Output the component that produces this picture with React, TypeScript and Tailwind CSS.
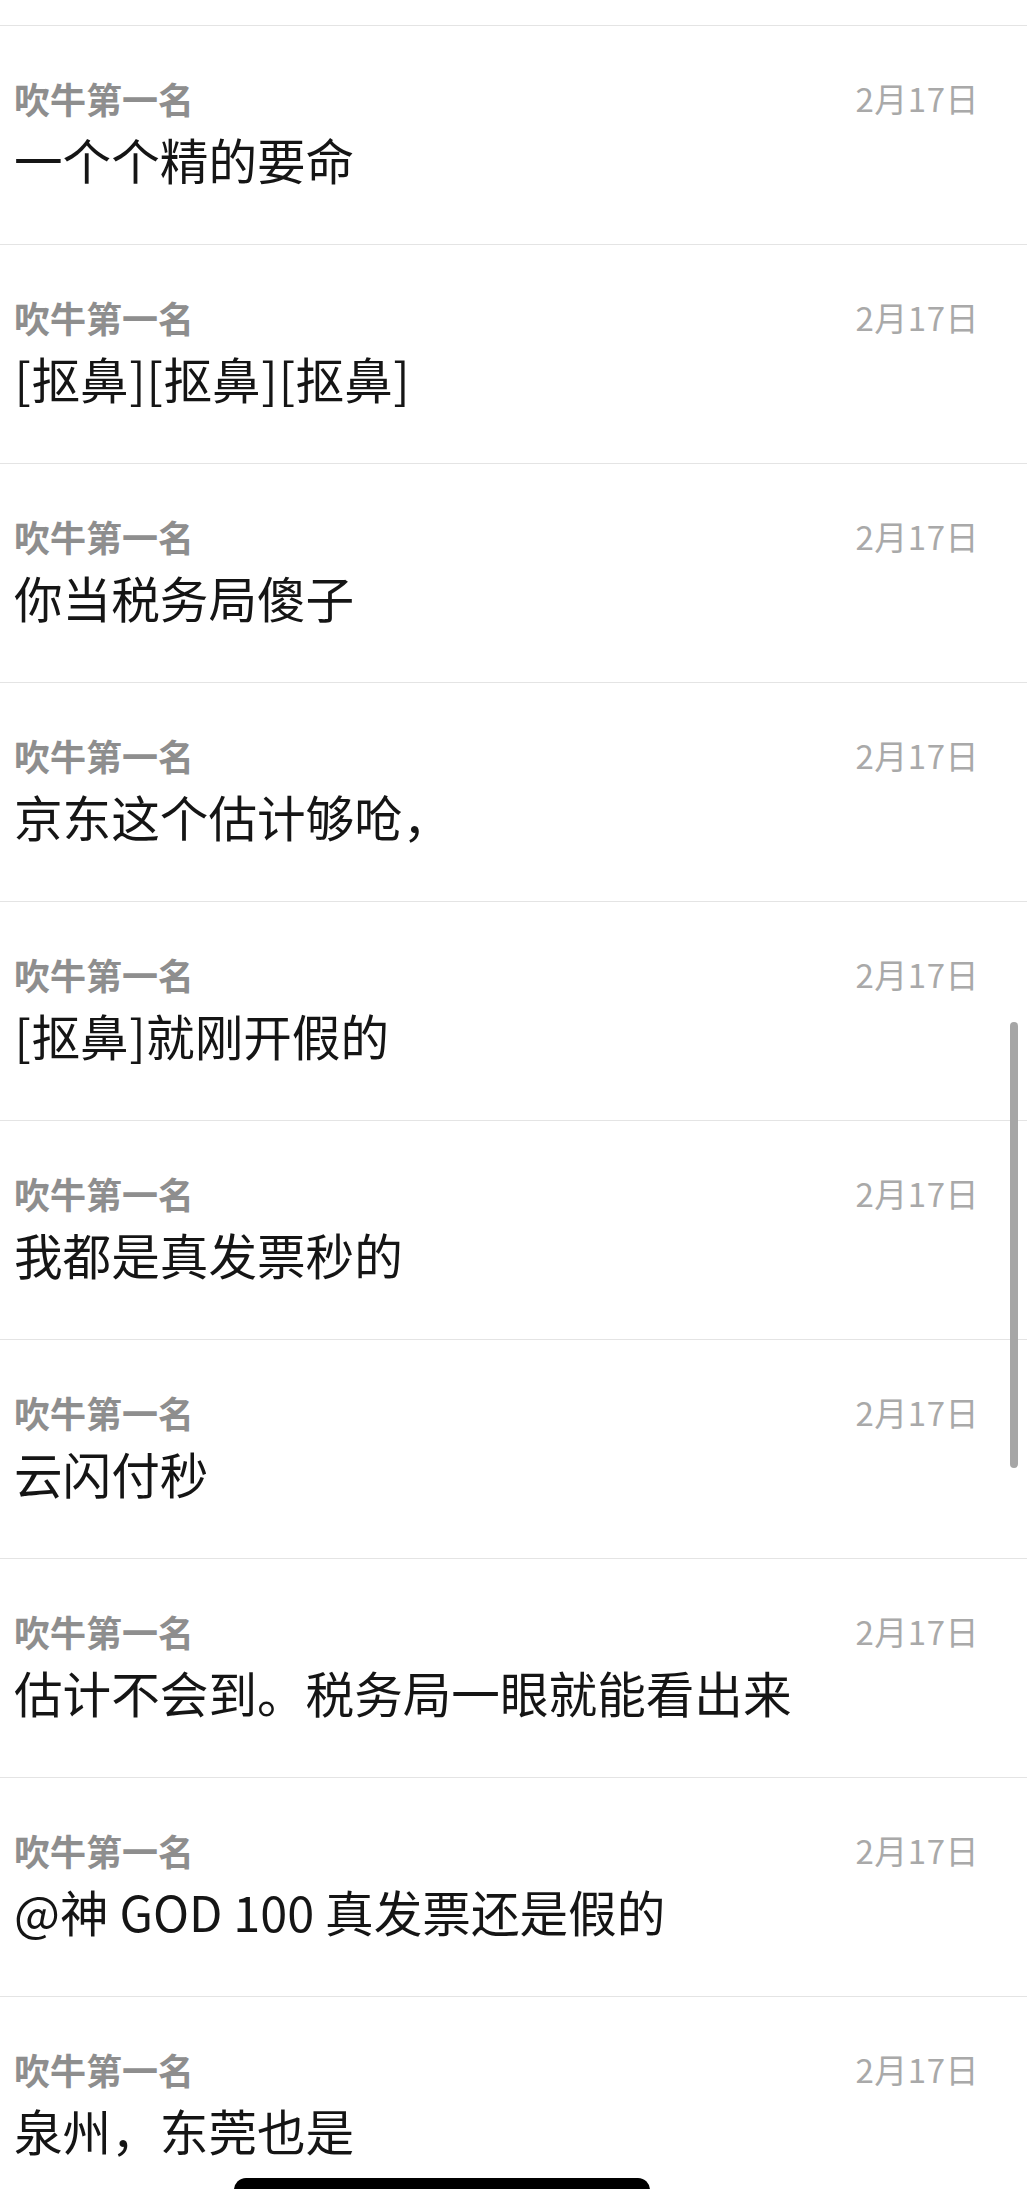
import React from "react";

const messages: React.ReactNode[] = [
  "一个个精的要命",
  <>
    <B>[</B>抠鼻<B>]</B>
    <B>[</B>抠鼻<B>]</B>
    <B>[</B>抠鼻<B>]</B>
  </>,
  "你当税务局傻子",
  "京东这个估计够呛，",
  <>
    <B>[</B>抠鼻<B>]</B>就刚开假的
  </>,
  "我都是真发票秒的",
  "云闪付秒",
  "估计不会到。税务局一眼就能看出来",
  "@神 GOD 100 真发票还是假的",
  "泉州，东莞也是",
];

function B({ children }: { children: React.ReactNode }) {
  return <span className="px-[0.5px]">{children}</span>;
}

const font = {
  fontFamily: '"Noto Sans CJK SC", "Noto Sans", sans-serif',
};

export default function App() {
  return (
    <div
      className="relative h-[2189px] w-[1027px] overflow-hidden bg-white"
      style={font}
    >
      <div className="h-[25px]" />
      {messages.map((m, i) => (
        <div
          key={i}
          className="h-[219px] border-t border-[#e4e4e4] pl-[14px] pr-[48px] pt-[52px]"
        >
          <div className="flex items-center justify-between">
            <span className="text-[36px] leading-[40px] font-semibold text-[#8e8e8e]">
              吹牛第一名
            </span>
            <span className="text-[33px] leading-[40px] tracking-[0.5px] text-[#a9a9a9]">
              2月17日
            </span>
          </div>
          <div className="mt-[13px] text-[48.6px] leading-[56px] text-[#151515]">
            {m}
          </div>
        </div>
      ))}
      <div className="absolute left-[1010px] top-[1022px] h-[446px] w-[8px] rounded-full bg-[#a6a6a6]" />
      <div className="absolute left-[234px] top-[2178px] h-[24px] w-[416px] rounded-full bg-black" />
    </div>
  );
}
